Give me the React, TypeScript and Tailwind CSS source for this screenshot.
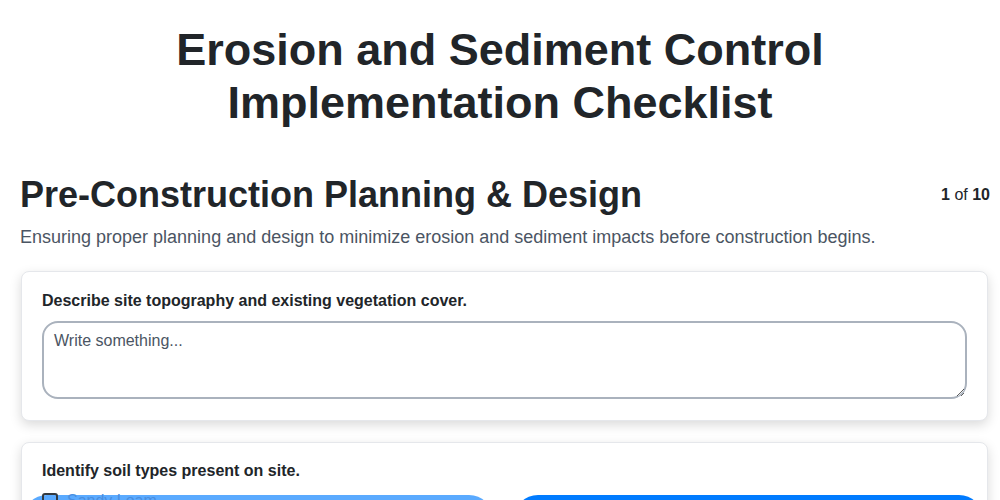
import React from "react";

export default function App() {
  return (
    <div className="min-h-screen bg-white pt-6 font-['Liberation_Sans',Arial,sans-serif] text-[#212529]">
      <h1 className="text-center text-[45px] font-bold leading-[1.17]">
        Erosion and Sediment Control
        <br />
        Implementation Checklist
      </h1>

      <div className="pl-5 pr-[10px]">
        <div className="mt-[44px] flex items-center justify-between">
          <h2 className="text-[36px] font-bold leading-[1.2]">Pre-Construction Planning &amp; Design</h2>
          <div className="text-base">
            <span className="font-bold">1</span> of <span className="font-bold">10</span>
          </div>
        </div>
        <p className="mt-2 text-[18px] leading-[1.5] text-[#4b5563]">
          Ensuring proper planning and design to minimize erosion and sediment impacts before construction begins.
        </p>

        <div className="ml-px mr-[2px] mt-[20px] rounded-lg border border-[#e5e7eb] bg-white px-5 pb-[21px] pt-[17px] shadow-[0_4px_12px_rgba(0,0,0,0.15)]">
          <label className="mb-2 block text-base font-bold leading-6">
            Describe site topography and existing vegetation cover.
          </label>
          <textarea
            className="block h-[78px] w-full rounded-2xl border-2 border-[#aab2bd] px-2.5 pt-1.5 text-base leading-6 text-[#212529] placeholder:text-[#4b5563] outline-none"
            placeholder="Write something..."
          />
        </div>

        <div className="ml-px mr-[2px] mt-[21px] rounded-lg border border-[#e5e7eb] bg-white px-5 pb-5 pt-4 shadow-[0_4px_12px_rgba(0,0,0,0.15)]">
          <div className="text-base font-bold leading-6">Identify soil types present on site.</div>
          <div className="-ml-[19px] -mr-[16px] mt-3 grid grid-cols-2 gap-[21px]">
            <div className="h-[56px] rounded-[24px] bg-[#5aaaff] px-[19px]">
              <label className="-mt-1 flex items-center gap-[9px] text-base leading-5 text-[#4a8ee0]">
                <span className="inline-block h-4 w-4 rounded-[3px] border-2 border-[#343a40]" />
                Sandy Loam
              </label>
            </div>
            <div className="h-[56px] rounded-[24px] bg-[#007bff]" />
          </div>
        </div>
      </div>
    </div>
  );
}
